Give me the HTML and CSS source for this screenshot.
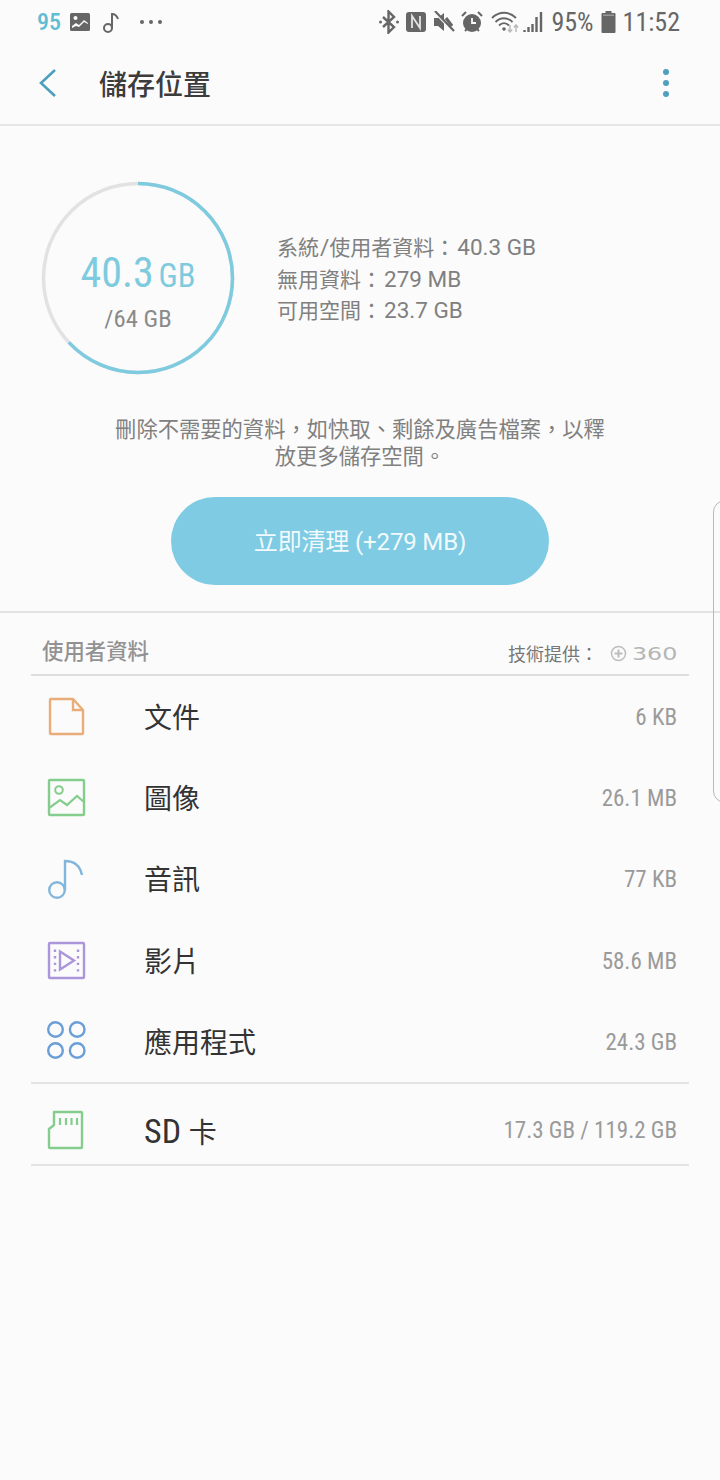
FILE: index.html
```html
<!DOCTYPE html>
<html lang="zh-Hant">
<head>
<meta charset="utf-8">
<title>儲存位置</title>
<link rel="stylesheet" href="styles.css">
</head>
<body>
<div class="page">
  <div class="status">
    <div class="status-left">
      <span class="status-num">95</span>
      <svg class="si" width="22" height="20" viewBox="0 0 22 20"><rect x="1" y="1" width="20" height="18" rx="1.5" fill="#666"/><circle cx="6.500" cy="6" r="2" fill="#fbfbfb"/><path d="M3 14l4-3 3 2 5-5 4 3v1l-4-2-5 5-3-1-4 2z" fill="#fbfbfb"/></svg>
      <svg class="si note" width="20" height="22" viewBox="0 0 20 22"><circle cx="6" cy="16" r="4" fill="none" stroke="#666" stroke-width="2"/><path d="M10 16V2c3 0 5 2 6 5" fill="none" stroke="#666" stroke-width="2"/></svg>
      <span class="dots"><i></i><i></i><i></i></span>
    </div>
    <div class="status-right">
      <svg width="20" height="24" viewBox="0 0 20 24"><path d="M4 7l11 10-5.500 5.500V1.500L15 7 4 17" fill="none" stroke="#666" stroke-width="2.400"/><circle cx="1.500" cy="12" r="1.500" fill="#666"/><circle cx="18.500" cy="12" r="1.500" fill="#666"/></svg>
      <svg width="22" height="22" viewBox="0 0 22 22"><rect x="1" y="1" width="20" height="20" rx="3" fill="#666"/><path d="M7 17V5l8 12V5" fill="none" stroke="#e4e4e4" stroke-width="1.800"/></svg>
      <svg width="22" height="22" viewBox="0 0 22 22"><path d="M1 7h4l6-5v18l-6-5H1z" fill="#666"/><path d="M13 7l6 8" stroke="#666" stroke-width="3"/><path d="M1 1l19 20" stroke="#fbfbfb" stroke-width="1.500"/><path d="M2 0l19 20" stroke="#666" stroke-width="2.200"/></svg>
      <svg width="22" height="22" viewBox="0 0 22 22"><circle cx="11" cy="12" r="9" fill="#666"/><path d="M11 7v5h4" fill="none" stroke="#fbfbfb" stroke-width="1.800"/><path d="M1 5l4-4M21 5l-4-4M4 20l2-2M18 20l-2-2" stroke="#666" stroke-width="2"/></svg>
      <svg class="sp" width="28" height="22" viewBox="0 0 28 22"><path d="M1 7c7-7 17-7 24 0M4.500 11c5-5 12-5 17 0M8 14.500c3-3 7-3 10 0" fill="none" stroke="#666" stroke-width="1.800"/><circle cx="13" cy="18" r="1.800" fill="#666"/><path d="M19 14v7M16.800 18.500l2.200 2.500 2.200-2.500" fill="none" stroke="#bbb" stroke-width="1.500"/><path d="M25 21v-7M22.800 16.500l2.200-2.500 2.200 2.500" fill="none" stroke="#bbb" stroke-width="1.500"/></svg>
      <svg class="sig" width="20" height="22" viewBox="0 0 20 22"><path d="M1.500 21v-2M5.500 21v-5M9.500 21v-8M13.500 21V6M18 21V1" stroke="#666" stroke-width="2.400"/></svg>
      <span class="status-text pct">95%</span>
      <svg class="batt" width="15" height="24" viewBox="0 0 15 24"><path d="M4.500 1h6v2h3a1 1 0 0 1 1 1v18a1 1 0 0 1-1 1h-12a1 1 0 0 1-1-1V4a1 1 0 0 1 1-1h3z" fill="#666"/><rect x="2" y="4.500" width="11" height="1.500" fill="#999"/></svg>
      <span class="status-text time">11:52</span>
    </div>
  </div>

  <header class="toolbar">
    <svg class="back" width="20" height="30" viewBox="0 0 20 30"><path d="M17 2L3 15l14 13" fill="none" stroke="#4e9fbd" stroke-width="2.600"/></svg>
    <h1 class="title">儲存位置</h1>
    <span class="more"><i></i><i></i><i></i></span>
  </header>

  <section class="summary">
    <div class="usage">
      <div class="ring">
        <svg class="ring-svg" width="194" height="194" viewBox="0 0 194 194">
          <circle cx="97" cy="97" r="94.500" fill="none" stroke="#e2e2e2" stroke-width="3.500"/>
          <circle cx="97" cy="97" r="94.500" fill="none" stroke="#7ecbe0" stroke-width="3.500" stroke-dasharray="373.900 593.800" transform="rotate(-90 97 97)"/>
        </svg>
        <div class="ring-main"><span class="ring-num">40.3</span> <span class="ring-unit">GB</span></div>
        <div class="ring-total">/64 GB</div>
      </div>
      <div class="info">
        <div>系統<span class="lat slash">/</span>使用者資料：<span class="lat">40.3 GB</span></div>
        <div>無用資料：<span class="lat">279 MB</span></div>
        <div>可用空間：<span class="lat">23.7 GB</span></div>
      </div>
    </div>
    <p class="desc">刪除不需要的資料，如快取、剩餘及廣告檔案，以釋<br>放更多儲存空間。</p>
    <button class="clean">立即清理 (+279 MB)</button>
  </section>

  <section class="files">
    <div class="files-head">
      <span class="files-title">使用者資料</span>
      <span class="credit">技術提供：
        <svg class="logo-mark" width="17" height="17" viewBox="0 0 17 17"><circle cx="8.500" cy="8.500" r="7" fill="none" stroke="#bdbdbd" stroke-width="1.500"/><path d="M8.500 4.500v8M4.500 8.500h8" stroke="#bdbdbd" stroke-width="2"/></svg>
        <span class="logo-text">360</span>
      </span>
    </div>
    <div class="row">
      <svg class="ico" width="44" height="44" viewBox="0 0 44 44"><path d="M7 4h22l10 11v23a1 1 0 0 1-1 1H7a1 1 0 0 1-1-1V5a1 1 0 0 1 1-1z" fill="none" stroke="#e8ad78" stroke-width="2.400" stroke-linejoin="round"/><path d="M29 4v11h10" fill="none" stroke="#e8ad78" stroke-width="2.400"/></svg>
      <span class="name">文件</span><span class="val">6 KB</span>
    </div>
    <div class="row">
      <svg class="ico" width="44" height="44" viewBox="0 0 44 44"><rect x="5" y="4" width="35" height="35" rx="1" fill="none" stroke="#85cd8c" stroke-width="2.400"/><circle cx="15" cy="14" r="3.800" fill="none" stroke="#85cd8c" stroke-width="2"/><path d="M5 32l11-8 7 5 10-9 7 6" fill="none" stroke="#85cd8c" stroke-width="2.200"/></svg>
      <span class="name">圖像</span><span class="val">26.1 MB</span>
    </div>
    <div class="row">
      <svg class="ico" width="44" height="44" viewBox="0 0 44 44"><circle cx="13" cy="32" r="7.800" fill="none" stroke="#82b6dc" stroke-width="2.400"/><path d="M21 32V3c9 0 15 5 17 14" fill="none" stroke="#82b6dc" stroke-width="2.400"/></svg>
      <span class="name">音訊</span><span class="val">77 KB</span>
    </div>
    <div class="row">
      <svg class="ico" width="44" height="44" viewBox="0 0 44 44"><rect x="5" y="4" width="35" height="35" rx="1" fill="none" stroke="#ab96dc" stroke-width="2.400"/><path d="M16 12.500v18l14-9z" fill="none" stroke="#ab96dc" stroke-width="2.400"/><path d="M11 10.500v22M34 10.500v22" stroke="#ab96dc" stroke-width="2.400" stroke-dasharray="2.400 4.200"/></svg>
      <span class="name">影片</span><span class="val">58.6 MB</span>
    </div>
    <div class="row">
      <svg class="ico" width="44" height="44" viewBox="0 0 44 44"><g fill="none" stroke="#6a9ed6" stroke-width="2.400"><circle cx="11.500" cy="9.500" r="7.300"/><circle cx="33.200" cy="9.500" r="7.300"/><circle cx="11.500" cy="30.500" r="7.300"/><circle cx="33.200" cy="30.500" r="7.300"/></g></svg>
      <span class="name">應用程式</span><span class="val">24.3 GB</span>
    </div>
    <div class="row row-sd">
      <svg class="ico" width="44" height="44" viewBox="0 0 44 44"><path d="M10 3h27a1 1 0 0 1 1 1v34a1 1 0 0 1-1 1H6a1 1 0 0 1-1-1V20l5-4z" fill="none" stroke="#85cd8c" stroke-width="2.400" stroke-linejoin="round"/><path d="M16 9v7M22 9v7M27.500 9v7M33 9v7" stroke="#85cd8c" stroke-width="2.200"/></svg>
      <span class="name"><span class="sd">SD </span>卡</span><span class="val">17.3 GB / 119.2 GB</span>
    </div>
  </section>

  <div class="edge"></div>
</div>
</body>
</html>
```
FILE: styles.css
```css
* { box-sizing: border-box; }
html, body { margin: 0; padding: 0; }
body {
  background: #fbfbfb;
  font-family: Roboto, "Noto Sans CJK TC", sans-serif;
  font-stretch: 87%;
}
.page {
  position: relative;
  width: 720px;
  height: 1480px;
  overflow: hidden;
  background: #fbfbfb;
}
.status {
  display: flex;
  justify-content: space-between;
  align-items: center;
  height: 42px;
  padding: 1px 40px 0 37px;
}
.status-left, .status-right { display: flex; align-items: center; }
.status-right { gap: 6px; }
.sp { margin-left: 2px; }
.sig { margin-left: -2px; }
.status-num { font-size: 24px; font-weight: 500; color: #5fbdd4; width: 32px; }
.si { display: block; }
.note { margin-left: 11px; margin-top: 2px; }
.dots { display: flex; gap: 5px; margin-left: 18px; }
.dots i { width: 4px; height: 4px; border-radius: 50%; background: #666; }
.status-text { color: #666; font-size: 26px; line-height: 30px; }
.pct { margin-left: 2px; }
.batt { margin-left: 1px; }
.time { margin-left: 1px; }

.toolbar {
  display: flex;
  align-items: center;
  height: 84px;
  padding: 0 50px 0 38px;
  border-bottom: 2px solid #e6e6e6;
}
.back { display: block; margin-right: 41px; }
.title {
  margin: 0;
  padding-top: 5px;
  font-size: 28px;
  line-height: 40px;
  font-weight: 500;
  color: #3c3c3c;
  flex: 1;
}
.more { display: flex; flex-direction: column; gap: 5px; margin-right: 1px; }
.more i { width: 6px; height: 6px; border-radius: 50%; background: #4f9fbf; }

.summary {
  height: 487px;
  padding-top: 55px;
  border-bottom: 2px solid #e2e2e2;
}
.usage { display: flex; align-items: center; padding-left: 41px; }
.ring {
  position: relative;
  width: 194px;
  height: 194px;
  display: flex;
  flex-direction: column;
  align-items: center;
  flex: none;
}
.ring-svg { position: absolute; left: 0; top: 0; }
.ring-main { margin-top: 68px; line-height: 48px; color: #7ecbe0; white-space: nowrap; }
.ring-num { font-size: 42px; }
.ring-unit { font-size: 32.500px; margin-left: 1px; }
.ring-total { font-size: 24.700px; line-height: 30px; color: #8a8a8a; margin-top: -2px; }
.info {
  margin-left: 42px;
  padding-top: 3px;
  font-size: 21px;
  line-height: 30.500px;
  color: #808080;
}
.lat { font-size: 22.500px; font-stretch: 100%; margin-left: 2px; }
.slash { margin-left: 1px; }
.desc {
  margin: 41px 0 0;
  text-align: center;
  font-size: 21.300px;
  line-height: 27px;
  color: #808080;
}
.clean {
  display: block;
  width: 378px;
  height: 88px;
  margin: 27px auto 0;
  padding: 2px 0 0;
  border: 0;
  border-radius: 44px;
  background: #7ecbe3;
  color: #f1fafc;
  font: 24px/30px Roboto, "Noto Sans CJK TC", sans-serif;
  letter-spacing: -0.150px;
}

.files { padding: 0 31px; }
.files-head {
  display: flex;
  justify-content: space-between;
  align-items: center;
  height: 63px;
  padding: 18px 10px 0 11px;
  border-bottom: 2px solid #dedede;
}
.files-title { padding-bottom: 6px; font-size: 21.400px; font-weight: 500; color: #929292; }
.credit { display: flex; align-items: center; font-size: 18px; color: #777; white-space: nowrap; }
.logo-mark { display: block; margin: 2px 0 0 12px; }
.logo-text {
  display: inline-block;
  width: 47px;
  margin: 2px 0 0 5px;
  font-family: "DejaVu Sans", sans-serif;
  font-stretch: 100%;
  font-size: 18px;
  line-height: 20px;
  color: #b5b5b5;
  transform: scaleX(1.32);
  transform-origin: left center;
}
.row {
  display: flex;
  align-items: center;
  height: 81.300px;
  padding: 1px 12px 0 13px;
}
.ico { display: block; flex: none; width: 44px; height: 44px; margin-right: 56px; }
.name { flex: 1; padding-top: 3px; font-size: 28px; line-height: 40px; color: #333; }
.sd { font-size: 34px; }
.val { font-size: 23px; color: #9a9a9a; white-space: nowrap; }
.row-sd {
  height: 84px;
  padding-top: 13px;
  border-top: 2px solid #e4e4e4;
  border-bottom: 2px solid #e4e4e4;
}
.edge {
  position: absolute;
  left: 713px;
  top: 500px;
  width: 20px;
  height: 303px;
  border: 1.500px solid #b9b9b9;
  border-radius: 12px 0 0 12px;
}
```
